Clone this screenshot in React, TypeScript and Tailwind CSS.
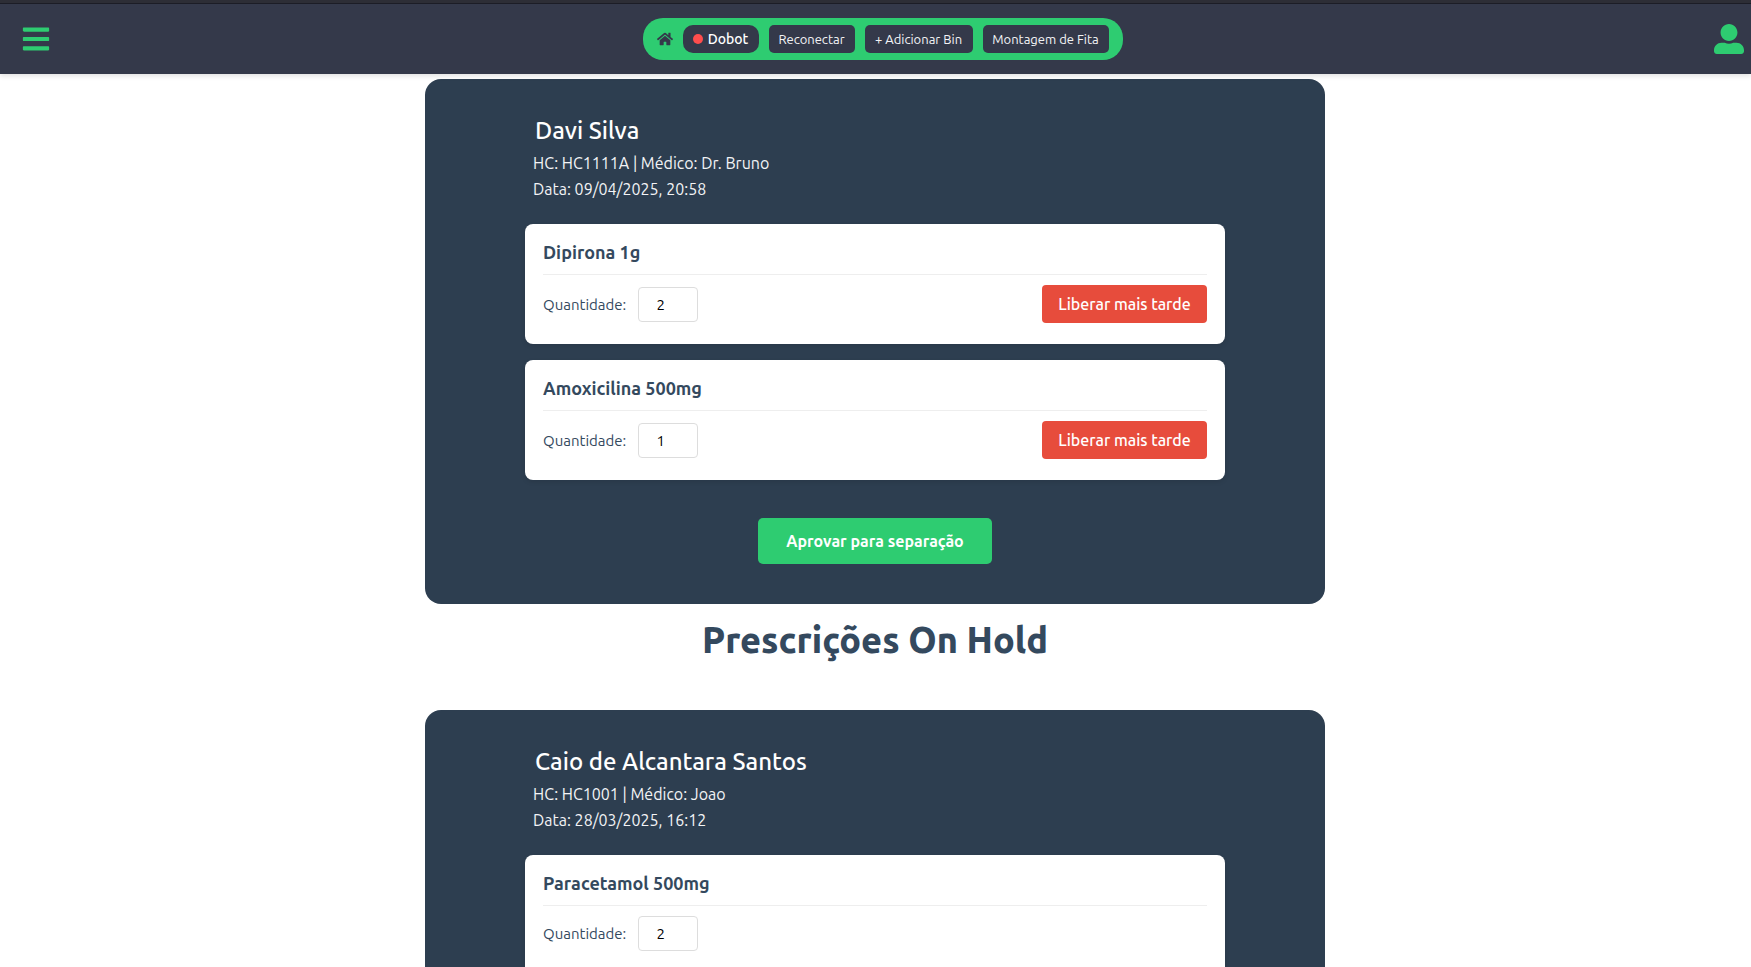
import { FaBars, FaHome, FaUserAlt } from "react-icons/fa";

type Medication = { name: string; quantity: number };

type Prescription = {
  id: string;
  patient: string;
  doctor: string;
  date: string;
  medications: Medication[];
};

const pending: Prescription = {
  id: "HC1111A",
  patient: "Davi Silva",
  doctor: "Dr. Bruno",
  date: "09/04/2025, 20:58",
  medications: [
    { name: "Dipirona 1g", quantity: 2 },
    { name: "Amoxicilina 500mg", quantity: 1 },
  ],
};

const onHold: Prescription = {
  id: "HC1001",
  patient: "Caio de Alcantara Santos",
  doctor: "Joao",
  date: "28/03/2025, 16:12",
  medications: [{ name: "Paracetamol 500mg", quantity: 2 }],
};

const actions = [
  { label: "Reconectar", width: "min-w-[86px]" },
  { label: "+ Adicionar Bin", width: "min-w-[108px]" },
  { label: "Montagem de Fita", width: "min-w-[126px]" },
];

function Header() {
  return (
    <header className="relative z-10 border-t-[3px] border-[#2d2e36] bg-[#34394a] shadow-[0_2px_5px_rgba(0,0,0,0.12)]">
      <div className="flex h-[71px] items-center justify-between border-t border-[#1c1d26] pr-[7px] pl-[21px]">
        <button type="button" aria-label="Menu" className="text-[30px] text-[#2ecc71]">
          <FaBars />
        </button>
        <nav className="flex h-[42px] items-center gap-[10px] rounded-[20px] bg-[#2ecc71] px-[14px]">
          <a href="#" aria-label="Home" className="text-base text-[#34394a]">
            <FaHome />
          </a>
          <span className="flex h-7 min-w-[76px] items-center justify-center gap-[5px] rounded-[10px] bg-[#34394a] text-sm font-medium text-white">
            <span className="size-[10px] rounded-full bg-[#ff4d4d]" />
            Dobot
          </span>
          {actions.map(({ label, width }) => (
            <button
              key={label}
              type="button"
              className={`h-7 rounded-[5px] bg-[#34394a] pt-px text-[13px] whitespace-nowrap text-gray-100 ${width}`}
            >
              {label}
            </button>
          ))}
        </nav>
        <button type="button" aria-label="Perfil" className="text-[30px] text-[#2ecc71]">
          <FaUserAlt />
        </button>
      </div>
    </header>
  );
}

function MedicationCard({ item, id, releasable }: { item: Medication; id: string; releasable: boolean }) {
  return (
    <li
      className={`rounded-lg bg-white px-[18px] text-[#34495e] shadow-[0_2px_5px_rgba(0,0,0,0.1)] ${
        releasable ? "pb-[21px]" : "pb-9"
      }`}
    >
      <h3 className="flex h-[51px] items-center border-b border-[#eeeeee] pt-[6px] text-lg font-semibold">{item.name}</h3>
      <div className="flex items-center justify-between pt-[10px]">
        <div className="flex items-center gap-3">
          <label htmlFor={id} className="pt-[2px] text-[15px]">
            Quantidade:
          </label>
          <input
            id={id}
            type="number"
            min={0}
            defaultValue={item.quantity}
            className="h-[35px] w-[60px] rounded border border-[#dddddd] bg-white text-center text-[15px] text-black"
          />
        </div>
        {releasable && (
          <button type="button" className="h-[38px] min-w-[165px] rounded bg-[#e74c3c] text-base font-medium text-white">
            Liberar mais tarde
          </button>
        )}
      </div>
    </li>
  );
}

function PrescriptionCard({ data, releasable }: { data: Prescription; releasable: boolean }) {
  return (
    <article className="mx-auto max-w-[900px] rounded-2xl bg-[#2d3e50] px-[100px] pt-[34px] pb-10">
      <header className="px-2 text-base leading-[26px] text-gray-100">
        <h2 className="px-[2px] pb-px text-2xl leading-[36px] font-medium text-white">{data.patient}</h2>
        <p>
          HC: {data.id} | Médico: {data.doctor}
        </p>
        <p>Data: {data.date}</p>
      </header>
      <ul className="mt-[22px] flex flex-col gap-4">
        {data.medications.map((item) => (
          <MedicationCard key={item.name} item={item} id={`${data.id}-${item.name}`} releasable={releasable} />
        ))}
      </ul>
      {releasable && (
        <button
          type="button"
          className="mx-auto mt-[38px] block h-[46px] min-w-[234px] rounded-[5px] bg-[#2ecc71] text-base font-semibold text-white"
        >
          Aprovar para separação
        </button>
      )}
    </article>
  );
}

export default function App() {
  return (
    <div className="min-h-screen bg-white font-['Ubuntu','Noto_Sans',sans-serif]">
      <Header />
      <main className="pt-[5px] pr-px pb-10">
        <PrescriptionCard data={pending} releasable />
        <h1 className="pt-3 pb-[46px] text-center text-[36px] leading-[48px] font-extrabold text-[#34495e]">
          Prescrições On Hold
        </h1>
        <PrescriptionCard data={onHold} releasable={false} />
      </main>
    </div>
  );
}
